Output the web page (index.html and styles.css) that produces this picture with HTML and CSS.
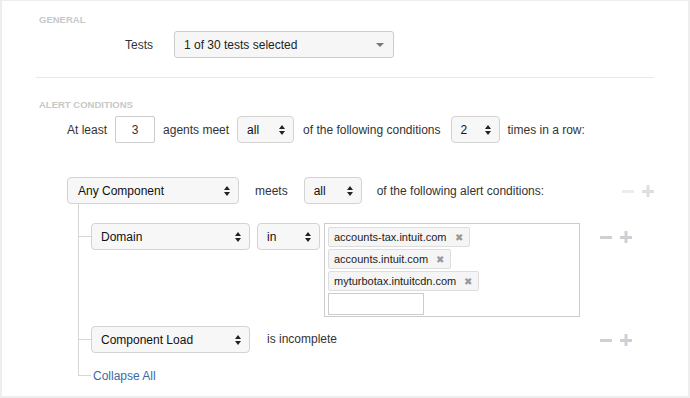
FILE: index.html
```html
<!DOCTYPE html>
<html lang="en">
<head>
    <meta charset="UTF-8">
    <meta name="viewport" content="width=device-width, initial-scale=1.0">
    <title>Alert Rule</title>
    <link rel="stylesheet" href="styles.css">
</head>
<body>
    <div class="panel">
        <section class="group">
            <h3 class="group-title">General</h3>
            <div class="tests-row">
                <span class="field-label">Tests</span>
                <div class="dropdown">
                    <span>1 of 30 tests selected</span>
                    <span class="caret"></span>
                </div>
            </div>
        </section>

        <hr class="divider">

        <section class="group">
            <h3 class="group-title alert-title">Alert Conditions</h3>
            <div class="sentence">
                <span>At least</span>
                <div class="num-input">3</div>
                <span>agents meet</span>
                <div class="select select-all">
                    <span>all</span>
                    <svg class="updown" width="6" height="10" viewBox="0 0 6 10"><path d="M3 0 L6 4 L0 4 Z M0 6 L6 6 L3 10 Z" fill="#222"/></svg>
                </div>
                <span class="gap-left">of the following conditions</span>
                <div class="select select-times">
                    <span>2</span>
                    <svg class="updown" width="6" height="10" viewBox="0 0 6 10"><path d="M3 0 L6 4 L0 4 Z M0 6 L6 6 L3 10 Z" fill="#222"/></svg>
                </div>
                <span>times in a row:</span>
            </div>

            <div class="condition-head">
                <div class="select select-component">
                    <span>Any Component</span>
                    <svg class="updown" width="6" height="10" viewBox="0 0 6 10"><path d="M3 0 L6 4 L0 4 Z M0 6 L6 6 L3 10 Z" fill="#222"/></svg>
                </div>
                <span class="wide-gap">meets</span>
                <div class="select select-meets">
                    <span>all</span>
                    <svg class="updown" width="6" height="10" viewBox="0 0 6 10"><path d="M3 0 L6 4 L0 4 Z M0 6 L6 6 L3 10 Z" fill="#222"/></svg>
                </div>
                <span>of the following alert conditions:</span>
                <div class="actions actions-top">
                    <svg width="12" height="12" viewBox="0 0 12 12"><rect x="0" y="5" width="12" height="3" fill="#ececec"/></svg>
                    <svg width="12" height="12" viewBox="0 0 12 12"><rect x="0" y="5" width="12" height="3" fill="#dcdfe2"/><rect x="4.5" y="0" width="3" height="12" fill="#dcdfe2"/></svg>
                </div>
            </div>

            <div class="tree">
                <div class="tree-row">
                    <span class="branch"></span>
                    <div class="select select-field">
                        <span>Domain</span>
                        <svg class="updown" width="6" height="10" viewBox="0 0 6 10"><path d="M3 0 L6 4 L0 4 Z M0 6 L6 6 L3 10 Z" fill="#222"/></svg>
                    </div>
                    <div class="select select-op">
                        <span>in</span>
                        <svg class="updown" width="6" height="10" viewBox="0 0 6 10"><path d="M3 0 L6 4 L0 4 Z M0 6 L6 6 L3 10 Z" fill="#222"/></svg>
                    </div>
                    <div class="tags">
                        <span class="tag">accounts-tax.intuit.com <span class="tag-x">&#10006;</span></span>
                        <span class="tag">accounts.intuit.com <span class="tag-x">&#10006;</span></span>
                        <span class="tag">myturbotax.intuitcdn.com <span class="tag-x">&#10006;</span></span>
                        <span class="tag-input"></span>
                    </div>
                    <div class="actions">
                        <svg width="12" height="12" viewBox="0 0 12 12"><rect x="0" y="5" width="12" height="3" fill="#cdd1d5"/></svg>
                        <svg width="12" height="12" viewBox="0 0 12 12"><rect x="0" y="5" width="12" height="3" fill="#cdd1d5"/><rect x="4.5" y="0" width="3" height="12" fill="#cdd1d5"/></svg>
                    </div>
                </div>
                <div class="tree-row">
                    <span class="branch"></span>
                    <div class="select select-field">
                        <span>Component Load</span>
                        <svg class="updown" width="6" height="10" viewBox="0 0 6 10"><path d="M3 0 L6 4 L0 4 Z M0 6 L6 6 L3 10 Z" fill="#222"/></svg>
                    </div>
                    <span class="status">is incomplete</span>
                    <div class="actions">
                        <svg width="12" height="12" viewBox="0 0 12 12"><rect x="0" y="5" width="12" height="3" fill="#cdd1d5"/></svg>
                        <svg width="12" height="12" viewBox="0 0 12 12"><rect x="0" y="5" width="12" height="3" fill="#cdd1d5"/><rect x="4.5" y="0" width="3" height="12" fill="#cdd1d5"/></svg>
                    </div>
                </div>
            </div>
            <div class="tree-end">
                <span class="corner"></span>
                <a class="collapse" href="#">Collapse All</a>
            </div>
        </section>
    </div>
</body>
</html>
```

FILE: styles.css
```css
* {
    box-sizing: border-box;
}

body {
    margin: 0;
    font-family: "Liberation Sans", Arial, sans-serif;
    font-size: 12px;
    color: #333;
    background-color: #fff;
}

.panel {
    width: 690px;
    height: 398px;
    border: 2px solid #eee;
    border-top-width: 1px;
    padding: 13px 34px 0 34px;
}

.group-title {
    margin: 0 0 0 3px;
    font-size: 9.5px;
    line-height: 11px;
    font-weight: bold;
    text-transform: uppercase;
    color: #c8c8c8;
}

.tests-row {
    display: flex;
    align-items: center;
    margin-top: 6px;
}

.field-label {
    margin-left: 89px;
    width: 49px;
}

.dropdown {
    width: 220px;
    height: 27px;
    display: flex;
    align-items: center;
    justify-content: space-between;
    padding: 0 8px 0 9px;
    border: 1px solid #ccc;
    border-radius: 3px;
    background-color: #f6f6f6;
    color: #222;
}

.caret {
    width: 0;
    height: 0;
    border-left: 4px solid transparent;
    border-right: 4px solid transparent;
    border-top: 4px solid #777;
    margin-right: 1px;
}

.divider {
    border: none;
    border-top: 1px solid #e8e8e8;
    margin: 19px 0 0 0;
}

.alert-title {
    margin-top: 21px;
}

.sentence,
.condition-head,
.tree-row {
    display: flex;
    align-items: center;
}

.sentence {
    margin: 6px 0 0 31px;
    gap: 8px;
}

.num-input {
    width: 40px;
    height: 27px;
    border: 1px solid #ccc;
    border-radius: 2px;
    display: flex;
    align-items: center;
    justify-content: center;
}

.select {
    height: 27px;
    display: flex;
    align-items: center;
    justify-content: space-between;
    padding: 0 8px 0 9px;
    border: 1px solid #d3d3d3;
    border-radius: 4px;
    background-color: #f7f7f7;
    color: #111;
}

.select-all { width: 57px; }
.select-times { width: 49px; margin-left: 2px; }
.gap-left { margin-left: 1px; }

.condition-head {
    margin: 34px 0 0 31px;
}

.select-component { width: 172px; padding-left: 10px; }
.wide-gap { margin: 0 16px; }
.select-meets { width: 58px; margin-right: 15px; }

.actions {
    display: flex;
    gap: 8px;
    margin-left: auto;
    margin-right: 22px;
}

.actions-top {
    margin-right: 0;
}

.tree {
    margin-left: 42px;
    border-left: 1px solid #d6d6d6;
    padding-top: 19px;
}

.tree-row {
    align-items: flex-start;
    margin-bottom: 9px;
}

.tree-row .actions {
    height: 27px;
    align-items: center;
}

.branch {
    width: 12px;
    height: 14px;
    border-bottom: 1px solid #d6d6d6;
}

.select-field { width: 159px; }
.select-op { width: 63px; margin-left: 7px; }

.status {
    line-height: 27px;
    margin-left: 17px;
}

.tags {
    width: 256px;
    height: 94px;
    margin-left: 4px;
    border: 1px solid #ccc;
    padding: 3px 3px 1px 3px;
    display: flex;
    flex-direction: column;
    align-items: flex-start;
    gap: 2px;
}

.tag {
    height: 20px;
    flex-shrink: 0;
    display: flex;
    align-items: center;
    padding: 0 6px 0 5px;
    border: 1px solid #ddd;
    border-radius: 2px;
    background-color: #f5f5f5;
    font-size: 11px;
    color: #222;
}

.tag-x {
    margin-left: 8px;
    font-size: 10px;
    color: #999;
}

.tag-input {
    width: 96px;
    height: 22px;
    flex-shrink: 0;
    border: 1px solid #ccc;
    background-color: #fff;
}

.tree-end {
    display: flex;
    align-items: flex-end;
    margin: -9px 0 0 42px;
}

.corner {
    width: 13px;
    height: 23px;
    border-left: 1px solid #d6d6d6;
    border-bottom: 1px solid #d6d6d6;
}

.collapse {
    margin: 0 0 -7px 2px;
    color: #3d6aa3;
    text-decoration: none;
    line-height: 14px;
}
```
